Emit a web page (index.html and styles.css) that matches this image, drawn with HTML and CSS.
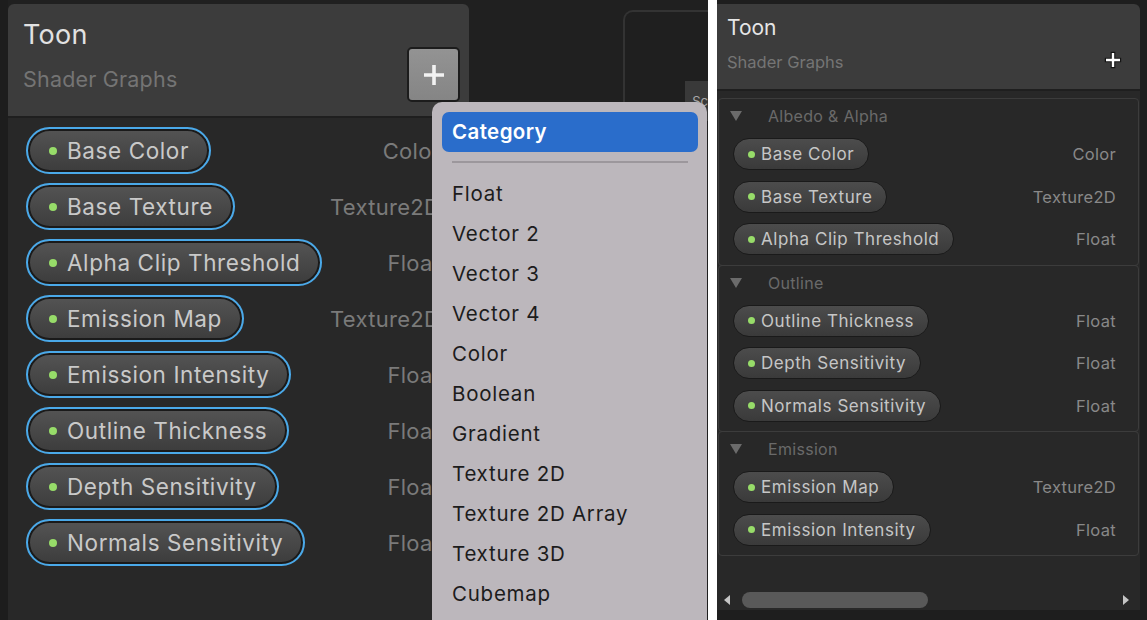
FILE: index.html
```html
<!DOCTYPE html>
<html>
<head>
<meta charset="utf-8">
<link rel="stylesheet" href="styles.css">
</head>
<body>
<div class="shot-left">
  <div class="edge"></div>
  <div class="blackboard">
    <div class="bb-head">
      <div class="bb-titles">
        <div class="bb-title">Toon</div>
        <div class="bb-sub">Shader Graphs</div>
      </div>
      <div class="plus-btn">
        <svg width="24" height="24" viewBox="0 0 24 24"><path d="M12 2v20M2 12h20" stroke="#f2f2f2" stroke-width="3.6" fill="none"/></svg>
      </div>
    </div>
    <div class="bb-sep"></div>
    <div class="bb-body">
      <div class="row-l"><span class="pill-l"><i class="dot-l"></i>Base Color</span><span class="type-l">Color</span></div>
      <div class="row-l"><span class="pill-l"><i class="dot-l"></i>Base Texture</span><span class="type-l">Texture2D</span></div>
      <div class="row-l"><span class="pill-l"><i class="dot-l"></i>Alpha Clip Threshold</span><span class="type-l">Float</span></div>
      <div class="row-l"><span class="pill-l"><i class="dot-l"></i>Emission Map</span><span class="type-l">Texture2D</span></div>
      <div class="row-l"><span class="pill-l"><i class="dot-l"></i>Emission Intensity</span><span class="type-l">Float</span></div>
      <div class="row-l"><span class="pill-l"><i class="dot-l"></i>Outline Thickness</span><span class="type-l">Float</span></div>
      <div class="row-l"><span class="pill-l"><i class="dot-l"></i>Depth Sensitivity</span><span class="type-l">Float</span></div>
      <div class="row-l"><span class="pill-l"><i class="dot-l"></i>Normals Sensitivity</span><span class="type-l">Float</span></div>
    </div>
  </div>
  <div class="canvas">
    <div class="graph-panel">
      <div class="graph-tab">Sc</div>
    </div>
  </div>
  <div class="menu">
    <div class="menu-hl">Category</div>
    <div class="menu-sep"></div>
    <div class="menu-item">Float</div>
    <div class="menu-item">Vector 2</div>
    <div class="menu-item">Vector 3</div>
    <div class="menu-item">Vector 4</div>
    <div class="menu-item">Color</div>
    <div class="menu-item">Boolean</div>
    <div class="menu-item">Gradient</div>
    <div class="menu-item">Texture 2D</div>
    <div class="menu-item">Texture 2D Array</div>
    <div class="menu-item">Texture 3D</div>
    <div class="menu-item">Cubemap</div>
  </div>
</div>
<div class="divider"></div>
<div class="shot-right">
  <div class="r-board">
    <div class="r-head">
      <div class="r-titles">
        <div class="r-title">Toon</div>
        <div class="r-sub">Shader Graphs</div>
      </div>
      <svg class="r-plus" width="18" height="18" viewBox="0 0 18 18"><path d="M9 0.8v16.4M0.8 9h16.4" stroke="#141414" stroke-width="4.6" fill="none"/><path d="M9 2v14M2 9h14" stroke="#ffffff" stroke-width="2.4" fill="none"/></svg>
    </div>
    <div class="r-sep"></div>
    <div class="r-body">
      <div class="section">
        <div class="sec-title"><span class="tri"></span>Albedo &amp; Alpha</div>
        <div class="row-r"><span class="pill-r"><i class="dot-r"></i>Base Color</span><span class="type-r">Color</span></div>
        <div class="row-r"><span class="pill-r"><i class="dot-r"></i>Base Texture</span><span class="type-r">Texture2D</span></div>
        <div class="row-r"><span class="pill-r"><i class="dot-r"></i>Alpha Clip Threshold</span><span class="type-r">Float</span></div>
      </div>
      <div class="section">
        <div class="sec-title"><span class="tri"></span>Outline</div>
        <div class="row-r"><span class="pill-r"><i class="dot-r"></i>Outline Thickness</span><span class="type-r">Float</span></div>
        <div class="row-r"><span class="pill-r"><i class="dot-r"></i>Depth Sensitivity</span><span class="type-r">Float</span></div>
        <div class="row-r"><span class="pill-r"><i class="dot-r"></i>Normals Sensitivity</span><span class="type-r">Float</span></div>
      </div>
      <div class="section">
        <div class="sec-title"><span class="tri"></span>Emission</div>
        <div class="row-r"><span class="pill-r"><i class="dot-r"></i>Emission Map</span><span class="type-r">Texture2D</span></div>
        <div class="row-r"><span class="pill-r"><i class="dot-r"></i>Emission Intensity</span><span class="type-r">Float</span></div>
      </div>
      <div class="spacer"></div>
      <div class="hscroll">
        <span class="arrow-l"></span>
        <span class="thumb"></span>
        <span class="track"></span>
        <span class="arrow-r"></span>
      </div>
    </div>
  </div>
</div>
</body>
</html>
```
FILE: styles.css
```css
* { box-sizing: border-box; }
html, body { margin: 0; padding: 0; }
body {
  width: 1147px;
  height: 620px;
  overflow: hidden;
  display: flex;
  background: #1e1e1e;
  font-family: Inter, "Noto Sans", sans-serif;
}

/* ---------- left screenshot ---------- */
.shot-left {
  width: 708px;
  height: 620px;
  display: flex;
  position: relative;
  overflow: hidden;
  background: #202020;
}
.edge { width: 8px; background: #1d1d1d; }
.blackboard {
  width: 462px;
  margin-top: 4px;
  display: flex;
  flex-direction: column;
}
.bb-head {
  height: 112px;
  background: #3c3c3c;
  border-radius: 6px 6px 0 0;
  display: flex;
  justify-content: space-between;
  align-items: flex-end;
  padding: 0 9px 14px 15px;
}
.bb-titles { align-self: flex-start; padding-top: 15px; }
.bb-title { font-size: 27px; line-height: 32px; color: #e2e2e2; letter-spacing: 0.3px; }
.bb-sub { font-size: 21.5px; line-height: 26px; color: #747474; margin-top: 15px; letter-spacing: 0.2px; }
.plus-btn {
  width: 53px;
  height: 55px;
  border: 2px solid #1c1c1c;
  border-radius: 5px;
  background: linear-gradient(#939393, #858585);
  display: flex;
  align-items: center;
  justify-content: center;
}
.bb-sep { height: 2px; background: #1f1f1f; }
.bb-body {
  flex: 1;
  background: #282828;
  padding: 9px 29px 0 18px;
}
.row-l {
  height: 47px;
  margin-bottom: 9px;
  display: flex;
  justify-content: space-between;
  align-items: center;
}
.pill-l {
  height: 47px;
  display: inline-flex;
  align-items: center;
  padding: 0 20px 0 21px;
  border: 2px solid #4aa9e9;
  border-radius: 24px;
  background: linear-gradient(#545454, #3c3c3c);
  box-shadow: inset 0 0 0 2px #1a1a1a;
  font-size: 22.5px;
  color: #c9c9c9;
  letter-spacing: 0.6px;
}
.dot-l {
  width: 8px;
  height: 8px;
  border-radius: 50%;
  background: #97dc69;
  margin-right: 10px;
}
.type-l { font-size: 22px; color: #7a7a7a; letter-spacing: 0.3px; }

.canvas {
  flex: 1;
  display: flex;
  padding: 10px 0 0 154px;
}
.graph-panel {
  flex: 1;
  border: 2px solid #333333;
  border-right: none;
  border-bottom: none;
  border-radius: 10px 0 0 0;
  background: #1f1f1f;
  padding: 69px 0 0 60px;
}
.graph-tab {
  height: 40px;
  background: #393939;
  color: #a8a8a8;
  font-size: 13px;
  line-height: 16px;
  padding: 12px 0 0 7px;
}

.menu {
  position: absolute;
  left: 432px;
  top: 102px;
  width: 275px;
  height: 560px;
  background: #bcb7bc;
  border-radius: 10px;
  padding: 10px 9px 0 10px;
}
.menu-hl {
  height: 40px;
  background: #2a6dcb;
  border-radius: 7px;
  color: #ffffff;
  font-size: 20.5px;
  font-weight: 600;
  line-height: 40px;
  padding-left: 10px;
  letter-spacing: 0.4px;
}
.menu-sep {
  height: 2px;
  background: #9c979c;
  margin: 9px 10px 11px 10px;
}
.menu-item {
  height: 40px;
  line-height: 40px;
  padding-left: 10px;
  font-size: 20.5px;
  color: #1c1c1c;
  letter-spacing: 0.75px;
}

.divider { width: 9px; background: #ffffff; }

/* ---------- right screenshot ---------- */
.shot-right {
  width: 430px;
  height: 620px;
  background: #1e1e1e;
}
.r-board {
  width: 423px;
  height: 606px;
  margin-top: 4px;
  display: flex;
  flex-direction: column;
}
.r-head {
  height: 85px;
  background: #3c3c3c;
  border-radius: 0 6px 0 0;
  display: flex;
  justify-content: space-between;
  padding: 0 18px 0 10px;
}
.r-titles { padding-top: 11px; }
.r-title { font-size: 21px; line-height: 26px; color: #e6e6e6; }
.r-sub { font-size: 16.5px; line-height: 20px; color: #757575; margin-top: 11px; }
.r-plus { margin-top: 47px; }
.r-sep { height: 2px; background: #1f1f1f; }
.r-body {
  flex: 1;
  background: #282828;
  padding: 7px 1px 2px 1px;
  display: flex;
  flex-direction: column;
}
.section {
  border: 1px solid #3c3c3c;
  border-radius: 4px;
  padding: 0 22px 4px 14px;
  margin-bottom: -1px;
}
.sec-title {
  height: 34px;
  display: flex;
  align-items: center;
  font-size: 16px;
  color: #6a6a6a;
  letter-spacing: 0.3px;
}
.tri {
  width: 0;
  height: 0;
  border-left: 6px solid transparent;
  border-right: 6px solid transparent;
  border-top: 10px solid #6b6b6b;
  margin: 0 26px 0 -3px;
}
.row-r {
  height: 42.5px;
  display: flex;
  justify-content: space-between;
  align-items: center;
}
.pill-r {
  height: 32px;
  display: inline-flex;
  align-items: center;
  padding: 0 14px 0 14px;
  border: 1px solid #1a1a1a;
  border-radius: 16px;
  background: linear-gradient(#4c4c4c, #3a3a3a);
  font-size: 17px;
  color: #c6c6c6;
  letter-spacing: 0.55px;
}
.dot-r {
  width: 7px;
  height: 7px;
  border-radius: 50%;
  background: #97dc69;
  margin-right: 6px;
}
.type-r { font-size: 16.5px; color: #898989; letter-spacing: 0.3px; }
.spacer { flex: 1; }
.hscroll {
  height: 16px;
  display: flex;
  align-items: center;
  padding: 0 10px 0 6px;
}
.arrow-l {
  width: 0; height: 0;
  border-top: 5px solid transparent;
  border-bottom: 5px solid transparent;
  border-right: 6px solid #c4c4c4;
}
.arrow-r {
  width: 0; height: 0;
  border-top: 5px solid transparent;
  border-bottom: 5px solid transparent;
  border-left: 6px solid #c4c4c4;
}
.thumb {
  width: 186px;
  height: 16px;
  border-radius: 8px;
  background: #595959;
  margin-left: 12px;
}
.track { flex: 1; }
```
